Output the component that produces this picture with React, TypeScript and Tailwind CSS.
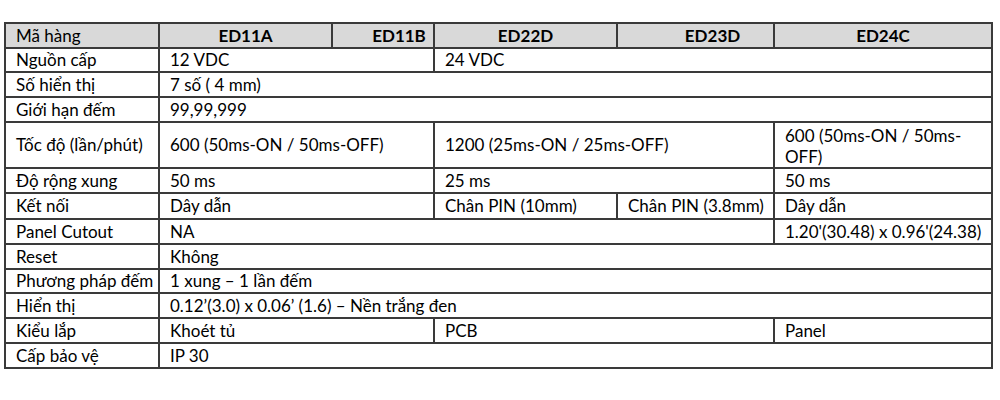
import React from "react";

type Cell = { t: React.ReactNode; span?: number; cls?: string };
type Row = { h: number; cells: Cell[] };

const rows: Row[] = [
  { h: 24, cells: [{ t: "Nguồn cấp" }, { t: "12 VDC", span: 2 }, { t: "24 VDC", span: 3 }] },
  { h: 25, cells: [{ t: "Số hiển thị" }, { t: "7 số ( 4 mm)", span: 5 }] },
  { h: 25, cells: [{ t: "Giới hạn đếm" }, { t: "99,99,999", span: 5 }] },
  {
    h: 45,
    cells: [
      { t: "Tốc độ (lần/phút)" },
      { t: "600 (50ms-ON / 50ms-OFF)", span: 2 },
      { t: "1200 (25ms-ON / 25ms-OFF)", span: 2 },
      {
        t: (
          <>
            600 (50ms-ON / 50ms-
            <br />
            OFF)
          </>
        ),
        cls: "leading-[21px] pt-[2px]",
      },
    ],
  },
  { h: 25, cells: [{ t: "Độ rộng xung" }, { t: "50 ms", span: 2 }, { t: "25 ms", span: 2 }, { t: "50 ms" }] },
  {
    h: 26,
    cells: [
      { t: "Kết nối" },
      { t: "Dây dẫn", span: 2 },
      { t: "Chân PIN (10mm)" },
      { t: "Chân PIN (3.8mm)" },
      { t: "Dây dẫn" },
    ],
  },
  { h: 25, cells: [{ t: "Panel Cutout" }, { t: "NA", span: 4 }, { t: "1.20'(30.48) x 0.96'(24.38)" }] },
  { h: 25, cells: [{ t: "Reset" }, { t: "Không", span: 5 }] },
  { h: 24, cells: [{ t: "Phương pháp đếm" }, { t: "1 xung – 1 lần đếm", span: 5 }] },
  { h: 25, cells: [{ t: "Hiển thị" }, { t: "0.12’(3.0) x 0.06’ (1.6) – Nền trắng đen", span: 5 }] },
  { h: 25, cells: [{ t: "Kiểu lắp" }, { t: "Khoét tủ", span: 2 }, { t: "PCB", span: 2 }, { t: "Panel" }] },
  { h: 25, cells: [{ t: "Cấp bảo vệ" }, { t: "IP 30", span: 5 }] },
];

const td = "border-2 border-[#3a3a3a] pl-[10px] pr-1 py-0 align-middle whitespace-nowrap";
const th = "border-2 border-[#3a3a3a] bg-[#d9d9d9] font-bold py-0 align-middle";

export default function App() {
  return (
    <div
      className="w-[1000px] h-[400px] bg-white pt-[22px] pl-[4px] text-black text-[17px] leading-[22px]"
      style={{ fontFamily: "Lato, 'Open Sans', sans-serif" }}
    >
      <table className="border-collapse table-fixed w-[989px]">
        <colgroup>
          <col className="w-[154px]" />
          <col className="w-[173px]" />
          <col className="w-[102px]" />
          <col className="w-[183px]" />
          <col className="w-[157px]" />
          <col className="w-[218px]" />
        </colgroup>
        <thead>
          <tr className="h-[25px]">
            <th className={`${th} text-left pl-[10px] font-normal`}>Mã hàng</th>
            <th className={`${th} text-center`}>ED11A</th>
            <th className={`${th} text-center pl-[32px]`}>ED11B</th>
            <th className={`${th} text-center`}>ED22D</th>
            <th className={`${th} text-center pl-[34px]`}>ED23D</th>
            <th className={`${th} text-center`}>ED24C</th>
          </tr>
        </thead>
        <tbody>
          {rows.map((r, i) => (
            <tr key={i} style={{ height: r.h }}>
              {r.cells.map((c, j) => (
                <td key={j} colSpan={c.span} className={`${td} ${c.cls ?? ""}`}>
                  {c.t}
                </td>
              ))}
            </tr>
          ))}
        </tbody>
      </table>
    </div>
  );
}
